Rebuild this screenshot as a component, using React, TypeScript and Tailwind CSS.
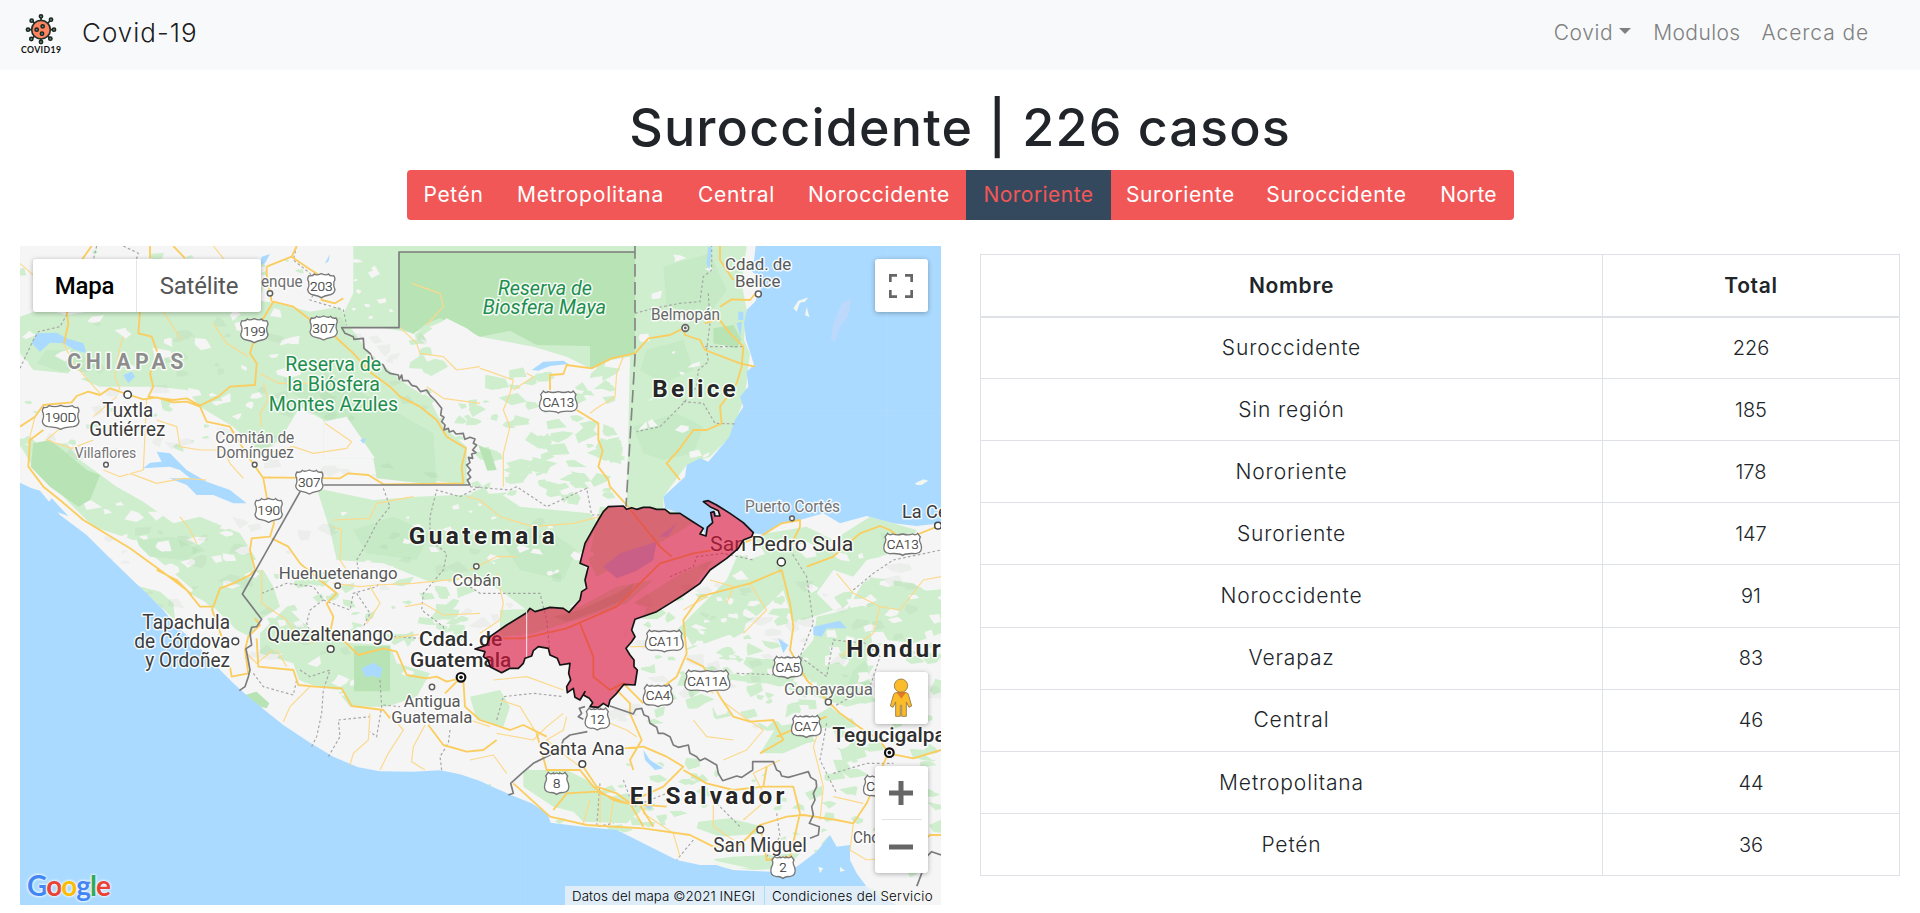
import type { ReactNode } from 'react';

/* ---------- map geometry ---------- */

const PACIFIC =
  'M60,728 95,745 120,752 180,825 260,885 330,955 410,1032 440,1060 490,1110 530,1160 560,1185 600,1225 640,1270 700,1330 745,1370 800,1415 850,1455 930,1508 1000,1550 1075,1582 1140,1594 1240,1595 1320,1591 1380,1603 1440,1623 1480,1642 1540,1668 1595,1690 1642,1720 1652,1748 1730,1758 1850,1770 1900,1795 1970,1830 2030,1860 2100,1875 2150,1875 2200,1890 2310,1895 2390,1880 2450,1835 2490,1785 2510,1820 2550,1815 2550,1860 2570,1900 2600,1940 2640,1970 2690,1995 60,1995Z';
const CARIBBEAN =
  'M2267,18 2262,60 2245,85 2275,110 2282,150 2265,185 2240,210 2232,250 2238,300 2250,335 2262,375 2240,395 2245,440 2220,470 2230,500 2205,540 2188,590 2155,630 2125,665 2100,655 2060,675 2055,710 1990,770 1995,805 2040,820 2110,865 2115,885 2135,850 2150,820 2115,785 2190,820 2260,880 2295,885 2340,850 2400,840 2470,820 2520,850 2600,828 2680,850 2750,858 2823,850 2823,18Z';
const REGION =
  'M415,800 460,798 470,808 485,803 500,808 520,802 540,802 560,808 585,808 600,820 630,820 665,843 700,865 690,882 708,888 712,862 728,848 722,818 732,815 735,828 750,828 745,812 720,800 700,785 715,782 740,795 780,820 820,848 850,878 845,890 820,900 805,925 770,955 720,990 690,1030 640,1065 600,1090 560,1115 495,1138 485,1170 495,1190 485,1205 468,1225 480,1245 492,1260 492,1280 502,1290 495,1335 462,1333 440,1360 420,1380 415,1400 400,1390 385,1402 360,1400 368,1388 358,1375 340,1365 345,1355 330,1380 315,1372 310,1345 292,1358 290,1340 302,1320 296,1300 300,1270 270,1275 262,1255 240,1245 235,1225 205,1220 190,1232 185,1248 165,1255 160,1270 145,1285 120,1285 95,1298 60,1280 55,1260 40,1250 45,1235 15,1227 50,1215 60,1190 110,1155 170,1118 180,1105 195,1115 240,1102 280,1105 297,1117 312,1100 330,1080 335,1055 350,1045 345,1020 355,980 330,970 345,910 385,840 400,815Z';

const GREENS = [
  'M60,230 130,205 200,225 420,190 560,215 700,170 830,190 930,215 1020,200 1050,260 1100,330 1200,420 1290,480 1330,560 1400,620 1400,735 1130,700 1120,655 970,655 970,540 900,500 840,600 780,640 700,560 600,500 560,450 470,440 300,440 200,400 100,390 60,340Z',
  'M1060,18H2240L2225,130 2240,210 2232,300 2250,340 2235,470 2190,590 2130,650 2060,675 1990,770 1990,810 1880,800 1890,350 1830,360 1770,385 1700,350 1600,320 1440,290 1340,240 1240,280 1130,260 1010,262 1060,160Z',
  'M60,615 200,610 240,660 350,740 430,785 520,850 600,830 720,880 770,960 730,1050 660,1070 640,1110 580,1050 500,980 400,900 280,860 190,770 110,700Z',
  'M950,745 1120,780 1250,770 1500,760 1560,800 1770,820 1795,850 1740,960 1765,1000 1740,1080 1700,1105 1580,1110 1500,1050 1400,1000 1300,1030 1150,970 1010,960 990,870Z',
  'M415,1038 480,1055 520,1090 525,1140Z',
  'M1800,800 2040,815 2080,850 1960,920 1790,1010 1765,960Z M1500,1110 1740,1100 1850,1040 1960,1020 1880,1090 1760,1130 1600,1180 1500,1190Z M1900,1090 2060,990 2140,960 2080,1040 1980,1110Z',
  'M780,1180 860,1100 900,1140 970,1200 1060,1210 1170,1215 1190,1270 1290,1300 1250,1370 1160,1400 1050,1400 1010,1350 900,1330 880,1270 780,1240Z',
  'M640,990 790,990 820,1040 840,1100 780,1140 750,1190 710,1170 640,1100 570,1060Z',
  'M2220,930 2300,880 2420,860 2500,900 2610,830 2750,870 2730,930 2600,960 2560,1010 2500,990 2450,1060 2500,1110 2380,1150 2350,1050 2280,1120 2200,1180 2060,1230 2030,1170 2180,1020Z',
  'M2450,1130 2540,1110 2600,1010 2740,1030 2823,1080 2823,1180 2740,1210 2660,1200 2600,1250 2620,1380 2540,1400 2450,1370 2300,1330 2200,1330 2240,1250 2380,1270 2440,1200Z',
  'M2330,1460 2430,1440 2490,1400 2570,1460 2600,1550 2530,1570 2510,1490 2420,1510 2350,1540 2280,1540Z',
  'M1570,1590 1700,1590 1760,1620 1830,1670 1880,1660 1920,1710 1880,1750 1750,1745 1720,1715 1660,1700 1570,1640Z',
  'M2095,1745 2190,1735 2290,1760 2290,1780 2160,1790 2090,1765Z M2140,1858 2200,1850 2400,1840 2360,1885 2260,1890 2180,1880Z',
  'M1410,1370 1500,1350 1530,1400 1510,1460 1430,1440Z',
  'M2490,1940 2550,1925 2660,1960 2600,1994 2540,1994Z',
];
const DEEP = [
  'M1198,36H1905V340L1830,360 1770,385V318L1610,315 1530,272 1440,290 1400,270 1320,235 1280,250 1240,282 1198,262Z',
  'M100,610 150,600 200,640 260,690 300,705 270,780 235,800 150,740 92,680Z',
  'M1062,1218H1170V1354H1062Z',
  'M2140,265 2200,255 2225,300 2210,325 2140,310Z',
  'M1435,615 1470,630 1490,690 1462,692Z',
  'M735,1365 770,1355 808,1390 800,1405 760,1395Z',
  'M1660,1130 1740,1110 1850,1060 1900,1030 1890,1070 1800,1110 1700,1145Z',
];
const MID = [
  'M860,440 1000,410 1160,500 1300,580 1310,735 1130,715 1120,655 1060,560 960,530Z',
  'M140,330 220,330 300,380 180,395 110,370Z',
  'M1990,80 2130,40 2180,150 2130,220 2000,200Z',
  'M1940,330 2050,300 2080,390 1990,430 1920,390Z',
  'M1900,560 2030,520 2110,560 2080,640 1990,660 1930,640Z',
  'M400,900 520,890 600,930 560,960 450,950Z',
  'M1060,870 1180,830 1290,880 1250,960 1100,940Z',
  'M1500,900 1660,880 1730,930 1690,1020 1560,990Z',
  'M2640,880 2700,880 2720,920 2660,930Z',
  'M2560,1290 2600,1260 2610,1350 2530,1370Z',
];
const LAKES = [
  'M95,310 110,280 170,278 200,295 250,310 260,340 225,330 190,310 150,308 120,335Z',
  'M470,635 510,640 560,690 620,725 690,750 740,790 700,790 640,765 590,765 560,735 508,715 570,715 540,690 510,680 430,685 450,668 485,665Z',
  'M370,405 395,395 405,410 385,430Z M785,50 810,42 795,70 780,75Z M990,42 985,65 975,70Z M1080,600 1097,594 1092,612Z',
  'M130,808 155,775 205,828 170,815Z',
  'M1085,1285 1120,1268 1148,1285 1140,1315 1118,1308 1095,1310Z',
  'M1595,390 1630,365 1690,362 1705,372 1650,378 1615,392Z',
  'M2125,20 2135,20 2128,90 2120,70Z M2215,215H2230V240H2215Z M2210,250 2225,245 2222,290Z',
  'M2440,1160 2520,1142 2540,1165 2480,1165 2465,1190 2440,1185Z M2335,1195 2365,1215 2350,1240Z',
  'M1930,1530 1950,1560 1990,1585 1965,1590 1935,1560Z M1930,1700 1965,1690 1950,1708Z',
  'M1810,980 1860,940 1970,905 1960,960 1910,992 1850,1015Z M1975,890 2030,850 2005,890Z',
];
const ISLANDS = [
  'M2380,205 2395,182 2425,172 2415,185 2400,188 2390,215Z M2420,200 2428,232 2415,225Z M2745,730 2770,718 2785,722 2765,735 2750,735Z',
  'M2455,1880 2470,1885 2460,1900Z M2520,1880 2535,1892 2520,1895Z M2090,1855 2160,1865 2250,1885 2180,1885Z',
];

const MAIN_ROADS = [
  'M60,560 105,530 130,495 215,487 230,468 265,455 300,465 330,445 380,462 430,478 470,472 520,487 560,485 600,500 620,545 690,560 720,610 745,650 790,715 800,770 822,850 810,890 755,895 750,930 765,990 750,1005 700,1030 660,1045 640,1100 600,1100 560,1050 480,990 390,925 250,840 180,780 130,740 85,680 90,600 130,570',
  'M420,215 415,280 455,290 475,345 450,400 460,440 445,470 520,480 560,475 600,497 655,470 690,440 765,435 770,370 750,340 765,290 790,235 820,185 880,200 925,235 1000,285 1060,340 1115,400 1170,440 1200,470 1260,500 1310,540 1340,590 1398,625 1385,680 1390,730 1150,733 1105,705 1045,700 1020,715 790,712',
  'M800,80 875,50 925,85 965,110 965,180 1005,190 1030,175 M890,18 875,50 M800,80 800,105 815,185 M450,18 450,55 M520,18 555,55 M275,18 245,60',
  'M200,215 205,250 192,310 M470,990 530,1020 575,1065',
  'M635,1105 665,1190 M765,1135 780,1155 745,1190 735,1230 745,1300 695,1310 690,1280 M770,1195 775,1280 880,1290 895,1335 945,1340 1025,1345 1055,1398 1150,1410 1170,1435',
  'M815,895 865,920 900,970 960,1020 1010,1060 980,1090 1000,1130 990,1180 1040,1210 1075,1245 1150,1225 1190,1235 1220,1305 1280,1315 1310,1310 1340,1325 1380,1315 1335,1360 M1390,1320 1395,1400 1440,1440 1530,1470 1570,1455 1640,1490 M1285,1455 1330,1515 1400,1535 1450,1530 1490,1500',
  'M1905,340 1835,355 1775,385 1700,375 1690,402 1650,405V450 M1730,510 1795,550 1795,600 1808,632 1795,680 1825,720 1830,740 1880,795 1940,870 1980,920 2015,950 M1905,340 1945,295 2010,285 2050,265 2055,285 2100,300 2115,330 2220,370 2265,380 M2115,250 2155,235 2190,280 2230,320 2225,380 2210,430 2160,500 2165,550 2120,570 2080,570 2040,625 2000,670 2040,720 M2265,162 2250,180 2195,178 2160,200 M2160,18V60L2200,120',
  'M1470,1195 1570,1195 1700,1165 1850,1100 1980,970 2080,940 2200,920 2280,890 2345,850 2400,840 2400,860 2370,920 M1740,1150 1780,1250 1780,1310 1830,1350 1870,1330 1930,1390 M1840,1340 1890,1390 1890,1420 1925,1500 1890,1560 1900,1590',
  'M2420,980 2500,950 2580,880 2640,858 2670,870 2710,900 2823,855 M2345,990 2370,1090 2380,1160 2370,1230 2420,1320 2480,1380 2520,1420 2590,1470 2640,1500 2665,1540 2740,1555 2823,1530 M2345,990 2250,1030 2100,1070 2050,1140 2060,1240 2030,1310 1990,1340 1940,1370',
  'M2060,1255 2110,1280 2160,1370 2200,1430 2250,1445 2320,1440 2350,1500 2280,1540 M2480,1430 2400,1460 2330,1490',
  'M1610,1480 1640,1590 1740,1590 1780,1640 1840,1680 1880,1690 1990,1640 2050,1580 2000,1550 1930,1520 1870,1525 M1540,1630 1650,1730 1760,1755 1930,1765 2070,1785 2140,1820 2220,1815 2280,1755 2360,1730 2410,1725 2510,1740 2560,1750 2600,1690 2660,1550 M1660,1710 1700,1660 1790,1655 1880,1690 2000,1700',
  'M2050,1590 2120,1630 2200,1650 2290,1640 2380,1640 2400,1720 2370,1850 2300,1860 2280,1755 M2300,1580 2290,1640 M1750,1580 1790,1640 1850,1660 1890,1690 1930,1760 M1910,1680 1960,1760 M2690,1870 2790,1785 2823,1785',
];
const MINOR_ROADS = [
  'M640,18 690,80 M60,70 105,110 M180,130 205,215 M490,215 545,300 M190,310 220,370 300,460 M370,290 360,320 345,410 360,450 M640,250 680,310 745,350 M780,400 835,430 930,430 M790,430 805,480 780,520 785,560',
  'M105,530 85,610 M180,565 140,600 215,625 280,600 M350,470 280,530 M440,475 430,690 360,710 310,690 M470,540 530,560 540,620 600,630 670,630 690,670 730,715 M390,700 470,730 550,715 620,720 M800,640 880,620 940,640 1040,625 1055,605 975,550',
  'M1235,130 1320,160 1330,200 1280,255 M1200,262 1250,310 1260,340 1330,350 1370,390 1440,380 M1280,440 1330,475 1440,490 M1440,385 1470,395 1540,420 1530,460 1510,510 1530,560 1510,640 1510,740 M1540,450 1600,410 1580,400 M1870,350 1850,400 1845,470 1790,505 1770,520',
  'M1000,840 1110,835 1130,790 1240,770 M1000,860 1025,870 1020,960 1040,990 M540,830 570,870 590,910 M1400,770 1440,780 1500,830 1600,860 1720,850 1800,830 M1410,990 1490,950 1550,950',
  'M785,990 785,1090 860,1140 880,1170 940,1210 M1000,1030 1080,1040 1130,1035 1240,1030 1440,1010 M1060,1200 1110,1200 M1100,1150 1140,1090 1110,1040 M1215,1100 1270,1090 1330,1125 1440,1120 M1180,1195 1210,1190 1280,1180',
  'M740,1240 770,1270 820,1230 M830,1230 860,1280 M930,1340 870,1400 850,1445 M1110,1420 1105,1500 1060,1540 1050,1575 M1170,1425 1210,1470 1165,1540 1140,1590 M1275,1455 1240,1520 1235,1565 1275,1590',
  'M1480,1320 1580,1310 1690,1350 M1490,1480 1600,1500 1640,1460 1690,1420 M1410,1560 1480,1545 1520,1600 M1700,1430 1690,1470 1640,1500 1700,1550 1740,1580 M1830,1450 1880,1470 1910,1490 M1800,1660 1800,1750 M1840,1680 1830,1750 M1770,1680 1750,1750',
  'M2510,1000 2560,1060 2640,1100 2620,1180 2560,1220 2520,1250 M2640,1100 2700,1110 2770,1020 2823,1010 M2060,1310 2110,1330 2140,1360 M2170,1385 2230,1430 2290,1470 2240,1530 2170,1560 M2460,1460 2440,1520 2470,1640 2460,1740 M2500,1670 2590,1690 M2560,1750 2550,1830 2600,1860 2690,1850',
  'M1890,1220 1960,1220 2010,1230 M2050,1110 2120,1070 M1960,1650 1930,1720 2020,1780 2040,1850 M2140,1690 2140,1760 2200,1800 M2340,1560 2260,1600 2300,1680 2230,1740',
  'M1490,1000 1510,1090 1500,1140 1440,1180 M2130,1020 2200,1040 2180,1090 M2250,1030 2300,1110 2230,1180 M1500,1380 1560,1400 1610,1480 M1410,1440 1470,1460 M1640,1590 1680,1650 M2200,1500 2120,1490 2080,1440',
];
const DOTTED = [
  'M60,385 100,300 115,275 180,260 205,215 M290,18 280,60 M370,18 415,40 405,70 M890,18 880,60 930,100 950,150 930,180 1030,210 1040,255',
  'M1905,220 1960,205 2040,190 2100,185 2110,110 2135,90 2135,18 M2125,160 2130,250 2120,330 2125,365 2095,390 2090,440 2050,490 1980,560 1910,575 M2115,320H2235 M2050,485 2110,490 2145,550 2210,552 M1410,740 1530,750 1550,740 1640,800 1760,745 1775,825 1800,825',
  'M1150,745 1170,800 1130,850 1100,910 1070,960 1075,990 M1440,740 1380,770 1310,750 1290,830 1290,900 1340,940 1330,990 1270,1060 1265,1110 1330,1160 1340,1220',
  'M785,1060 860,1030 940,1040 970,1080 930,1110 920,1150 940,1200 M970,1080 1050,1110 1060,1060 1130,1040 1160,990 M1070,1060 1110,1120 1090,1160 M1180,1190 1260,1195 M900,1290 930,1310 990,1290 970,1350 965,1420 950,1490 935,1520 M1140,1320 1145,1400 1130,1490 1110,1475 M985,1550 1020,1490 1015,1440 1110,1430 M760,1300 790,1340 880,1365 890,1320',
  'M1150,1395 1200,1400 M1350,1470 1345,1510 1320,1550 1325,1590 M1410,1040 1440,1060 1620,1060 1640,1140 1650,1240 M1490,1440 1510,1370 1600,1360 1690,1370',
  'M2010,1010 2080,980 2090,950 2170,940 2260,960 M2370,930 2420,1010 2440,1150 2400,1250 2480,1310 2500,1200 2600,1210 2640,1250 2610,1340 2500,1400 M2560,1050 2620,1000 2680,960 2823,930 M2210,1300 2350,1305',
  'M1800,1630 1790,1760 1840,1750 M1870,1620 1900,1700 2000,1660 M2080,1800 2030,1860 M2150,1690 2220,1760 M2480,1450 2460,1560 2510,1660 M2500,1600 2600,1570 2680,1570 M2330,1720 2340,1790 2300,1850',
];
const BORDERS = [
  'M1905,36H1197V263H1025L1035,280 1060,290 1062,298 1090,295 1092,325 1110,340 1118,358 1130,365 1150,375 1158,392 1170,400 1195,405 1198,418 1205,405 1208,422 1225,422 1235,436 1250,440 1262,455 1280,450 1290,466 1305,480 1325,505 1322,525 1332,532 1325,545 1335,555 1332,570 1345,565 1348,576 1360,572 1368,582 1390,580 1392,590 1395,598 1410,592 1425,597 1420,610 1430,615 1418,630 1428,638 1415,642 1418,655 1405,652 1410,668 1400,675 1412,690 1403,700 1412,712 1402,720 1410,735H970',
  'M902,752 727,1062 785,1138 770,1160 755,1162 750,1180 755,1215 738,1226 750,1290 745,1310 735,1340 718,1352',
  'M1762,1475 1710,1485 1690,1500 1680,1530 1600,1570 1565,1600 1532,1630 1540,1660 1525,1665 M1755,1400 1738,1405 1745,1420 1735,1430 1750,1438',
  'M1830,1398 1900,1422 1907,1408 1925,1405 1932,1425 1945,1430 1950,1450 1970,1462 1975,1480 1990,1480 2010,1490 2020,1515 2035,1522 2065,1515 2070,1540 2090,1550 2100,1562 2115,1555 2150,1575 2155,1600 2168,1622 2210,1608 2225,1612 2258,1590 2258,1565 2320,1565 2330,1590 2340,1595 2345,1608 2365,1612 2390,1605 2425,1595 2432,1612 2448,1622 2450,1640 2440,1660 2445,1680 2435,1700 2440,1725 2428,1750 2458,1760 2455,1785 2430,1795',
  'M2823,1845 2795,1835 2760,1870 2765,1900 2750,1940',
];

/* Deterministic scatter of small angular land-cover patches. */
const patches = (seed: number, count: number, box: [number, number, number, number], size: number) => {
  let s = seed;
  const rnd = () => {
    s = (s * 16807) % 2147483647;
    return s / 2147483647;
  };
  let d = '';
  for (let i = 0; i < count; i++) {
    const cx = box[0] + rnd() * box[2];
    const cy = box[1] + rnd() * box[3];
    const n = 4 + Math.floor(rnd() * 3);
    const r = size * (0.4 + rnd());
    for (let k = 0; k < n; k++) {
      const a = (k / n) * Math.PI * 2 + rnd() * 0.9;
      const q = r * (0.35 + rnd() * 0.75);
      d += `${k ? 'L' : 'M'}${(cx + Math.cos(a) * q * 1.25).toFixed(0)},${(cy + Math.sin(a) * q * 0.75).toFixed(0)}`;
    }
    d += 'Z';
  }
  return d;
};
const PALE = [
  patches(11, 40, [80, 220, 800, 330], 24),
  patches(29, 10, [1060, 60, 120, 180], 14),
  patches(41, 18, [1930, 40, 250, 640], 17),
  patches(53, 38, [60, 740, 720, 320], 24),
  patches(67, 30, [960, 760, 800, 240], 16),
  patches(79, 34, [700, 1130, 680, 260], 20),
  patches(83, 100, [2050, 900, 770, 650], 28),
].join('');
const SCATTER = [
  patches(101, 90, [1420, 370, 440, 410], 30),
  patches(113, 16, [60, 450, 700, 180], 18),
  patches(127, 46, [820, 1000, 600, 200], 26),
  patches(131, 90, [1940, 1060, 880, 400], 32),
  patches(149, 50, [1420, 1560, 1000, 240], 20),
  patches(151, 44, [2450, 1420, 370, 480], 30),
  patches(163, 18, [60, 30, 900, 150], 20),
  patches(167, 26, [1230, 250, 200, 380], 26),
].join('');
const SHADE = [
  patches(211, 60, [150, 220, 1150, 500], 26),
  patches(223, 60, [300, 830, 1400, 420], 28),
  patches(227, 60, [1800, 980, 1000, 480], 28),
].join('');

/* ---------- map symbols ---------- */

type LabelProps = { x: number; y: number; w: number; s?: number; c?: string; weight?: number; italic?: boolean; gap?: boolean; children: string };
function Label({ x, y, w, s = 58, c = '#3c3c3c', weight = 400, italic, gap, children }: LabelProps) {
  return (
    <text
      x={x} y={y} textLength={w} lengthAdjust={gap ? 'spacing' : 'spacingAndGlyphs'} fontSize={s} fontWeight={weight}
      fontStyle={italic ? 'italic' : 'normal'} fill={c} stroke="#fff" strokeOpacity=".85" strokeWidth="9" strokeLinejoin="round" paintOrder="stroke"
    >
      {children}
    </text>
  );
}

function Town({ x, y, r = 8, c = '#5f5f5f' }: { x: number; y: number; r?: number; c?: string }) {
  return <circle cx={x} cy={y} r={r} fill="#fff" stroke={c} strokeWidth="4.5" />;
}

function Capital({ x, y, r = 13, c = '#111' }: { x: number; y: number; r?: number; c?: string }) {
  return (
    <g fill="none" stroke={c}>
      <circle cx={x} cy={y} r={r} fill="#fff" strokeWidth={r * 0.5} />
      <circle cx={x} cy={y} r={r * 0.42} fill={c} stroke="none" />
    </g>
  );
}

function MxShield({ x, y, w = 82, children }: { x: number; y: number; w?: number; children: string }) {
  const h = w / 2;
  return (
    <g transform={`translate(${x} ${y})`}>
      <path
        d={`M${-h + 4},-30 Q${-h + 14},-27 ${-h + 20},-35 Q-16,-29 0,-36 Q16,-29 ${h - 20},-35 Q${h - 14},-27 ${h - 4},-30 Q${h + 3},-20 ${h - 3},-12 Q${h - 6},0 ${h},12 Q${h - 2},26 ${h - 18},28 Q10,30 0,36 Q-10,30 ${-h + 18},28 Q${-h + 2},26 ${-h},12 Q${-h + 6},0 ${-h + 3},-12 Q${-h - 3},-20 ${-h + 4},-30Z`}
        fill="#fff" stroke="#777" strokeWidth="4"
      />
      <text y="15" textAnchor="middle" fontSize="41" fill="#3c3c3c" stroke="#3c3c3c" strokeWidth=".6">{children}</text>
    </g>
  );
}

function CaShield({ x, y, w = 114, children }: { x: number; y: number; w?: number; children: string }) {
  const h = w / 2;
  return (
    <g transform={`translate(${x} ${y})`}>
      <path
        d={`M${-h + 12},-33 Q${-h + 18},-25 ${-h + 27},-31 Q${-h * 0.3},-26 0,-31 Q${h * 0.3},-26 ${h - 27},-31 Q${h - 18},-25 ${h - 12},-33 L${h - 4},-22 Q${h - 10},-14 ${h - 2},0 Q${h + 5},25 ${h - 18},28 Q10,26 0,33 Q-10,26 ${-h + 18},28 Q${-h - 5},25 ${-h + 2},0 Q${-h + 10},-14 ${-h + 4},-22Z`}
        fill="#fff" stroke="#777" strokeWidth="4"
      />
      <text y="14" textAnchor="middle" fontSize="40" fill="#3c3c3c" stroke="#3c3c3c" strokeWidth=".6">{children}</text>
    </g>
  );
}

function MapCanvas() {
  return (
    <svg className="block size-full font-['Roboto',sans-serif]" viewBox="60 18 2763 1977" preserveAspectRatio="none">
      <rect x="60" y="18" width="2763" height="1977" fill="#f5f5f5" />
      <path d={SCATTER} fill="#ceeecd" />
      <path d={GREENS.join('')} fill="#ceeecd" />
      <path d={MID.join('')} fill="#c5eac5" />
      <path d={PALE} fill="#f5f5f5" />
      <path d={SHADE} fill="#4f7f4f" opacity=".05" />
      <path d={DEEP.join('')} fill="#b7e3b5" />
      <path d="M1270,285 1340,235 1400,265 1440,295 1540,330 1640,350 1580,380 1480,400 1400,370 1300,340Z M970,545 1040,530 1125,655 970,655Z" fill="#f5f5f5" />
      <path d={PACIFIC + CARIBBEAN + LAKES.join('')} fill="#aadaff" />
      <path d={ISLANDS.join('')} fill="#f1f6ee" />
      <path d="M2500,250 2525,190 2555,175 2545,230 2520,260 2505,305 2492,300Z" fill="#bcd8fb" />
      <path d={DOTTED.join('')} fill="none" stroke="#a6a6a6" strokeWidth="3.5" strokeDasharray="8 7" />
      <path d={MINOR_ROADS.join('')} fill="none" stroke="#fcd98b" strokeWidth="3.5" strokeLinejoin="round" />
      <path d={MAIN_ROADS.join('')} fill="none" stroke="#fbcd5e" strokeWidth="5.5" strokeLinejoin="round" />
      <path d={BORDERS.join('')} fill="none" stroke="#7c7c7c" strokeWidth="5" strokeLinejoin="round" />
      <path d="M1905,18V350L1878,800" fill="none" stroke="#858585" strokeWidth="5" strokeDasharray="38 16" />
      <path d="M2663,18V830M2230,511H2823M1577,1770V1995" stroke="#b4dcfd" strokeWidth="2" />

      <Label x={783} y={142} w={125} s={48} c="#6f6f6f">enque</Label>
      <Town x={810} y={160} />
      <Label x={202} y={387} w={348} s={64} c="#8d8d8d" weight={700} gap>CHIAPAS</Label>
      <Town x={383} y={464} r={11} c="#444" />
      <Label x={307} y={531} w={153}>Tuxtla</Label>
      <Label x={268} y={588} w={228}>Gutiérrez</Label>
      <Label x={224} y={655} w={185} s={46} c="#757575">Villaflores</Label>
      <Town x={318} y={674} r={7} />
      <Label x={646} y={608} w={237} s={49} c="#686868">Comitán de</Label>
      <Label x={649} y={655} w={233} s={49} c="#686868">Domínguez</Label>
      <Town x={764} y={674} r={7} />
      <Label x={856} y={393} w={287} c="#1e8e4e">Reserva de</Label>
      <Label x={862} y={453} w={278} c="#1e8e4e">la Biósfera</Label>
      <Label x={806} y={512} w={388} c="#1e8e4e">Montes Azules</Label>
      <Label x={1494} y={164} w={282} c="#1e8e4e" italic>Reserva de</Label>
      <Label x={1448} y={223} w={370} c="#1e8e4e" italic>Biosfera Maya</Label>
      <Label x={2175} y={89} w={199} s={51} c="#585858">Cdad. de</Label>
      <Label x={2205} y={140} w={136} s={51} c="#585858">Belice</Label>
      <Town x={2275} y={162} r={9} />
      <Label x={1953} y={240} w={207} s={48} c="#686868">Belmopán</Label>
      <Capital x={2056} y={264} r={10} c="#666" />
      <Label x={1957} y={471} w={250} s={73} c="#262626" weight={700} gap>Belice</Label>
      <Label x={1226} y={911} w={438} s={73} c="#262626" weight={700} gap>Guatemala</Label>
      <Town x={1429} y={979} />
      <Label x={1357} y={1038} w={146} s={51} c="#585858">Cobán</Label>
      <Label x={836} y={1016} w={357} s={51} c="#585858">Huehuetenango</Label>
      <Town x={1013} y={1037} />
      <Label x={427} y={1166} w={263}>Tapachula</Label>
      <Label x={403} y={1224} w={288}>de Córdova</Label>
      <Town x={706} y={1204} r={10} c="#444" />
      <Label x={436} y={1281} w={254}>y Ordoñez</Label>
      <Label x={801} y={1203} w={380}>Quezaltenango</Label>
      <Town x={992} y={1227} r={10} c="#444" />
      <Label x={1257} y={1217} w={250} s={60} c="#303030" weight={500}>Cdad. de</Label>
      <Label x={1230} y={1280} w={304} s={60} c="#303030" weight={500}>Guatemala</Label>
      <Capital x={1383} y={1312} />
      <Town x={1296} y={1341} />
      <Label x={1211} y={1400} w={171} s={51} c="#585858">Antigua</Label>
      <Label x={1174} y={1450} w={243} s={51} c="#585858">Guatemala</Label>
      <Label x={2130} y={934} w={430} s={61} c="#333">San Pedro Sula</Label>
      <Town x={2344} y={966} r={12} c="#333" />
      <Label x={2235} y={817} w={285} s={49} c="#757575">Puerto Cortés</Label>
      <Town x={2376} y={835} r={7} />
      <Label x={2706} y={833} w={210} s={57}>La Ceiba</Label>
      <Town x={2814} y={857} r={10} c="#444" />
      <Label x={2539} y={1251} w={375} s={73} c="#262626" weight={700} gap>Honduras</Label>
      <Label x={2352} y={1364} w={267} s={50} c="#686868">Comayagua</Label>
      <Town x={2485} y={1386} r={9} />
      <Label x={2497} y={1505} w={340} s={60} c="#303030" weight={500}>Tegucigalpa</Label>
      <Capital x={2668} y={1538} />
      <Label x={1616} y={1546} w={258} s={57}>Santa Ana</Label>
      <Town x={1747} y={1572} r={10} c="#444" />
      <Label x={1889} y={1692} w={464} s={73} c="#262626" weight={700} gap>El Salvador</Label>
      <Label x={2140} y={1835} w={281}>San Miguel</Label>
      <Town x={2281} y={1769} r={10} c="#444" />
      <Label x={2559} y={1808} w={205} s={51} c="#585858">Choluteca</Label>

      <MxShield x={964} y={137}>203</MxShield>
      <MxShield x={763} y={272}>199</MxShield>
      <MxShield x={971} y={264}>307</MxShield>
      <MxShield x={182} y={532} w={110}>190D</MxShield>
      <MxShield x={928} y={726}>307</MxShield>
      <MxShield x={806} y={811}>190</MxShield>
      <CaShield x={1675} y={486}>CA13</CaShield>
      <CaShield x={2708} y={913}>CA13</CaShield>
      <CaShield x={1993} y={1203}>CA11</CaShield>
      <CaShield x={2122} y={1323} w={136}>CA11A</CaShield>
      <CaShield x={1974} y={1367} w={90}>CA4</CaShield>
      <CaShield x={2363} y={1282} w={90}>CA5</CaShield>
      <CaShield x={2419} y={1459} w={90}>CA7</CaShield>
      <CaShield x={2635} y={1639} w={90}>CA1</CaShield>
      <CaShield x={1792} y={1437} w={74}>12</CaShield>
      <CaShield x={1670} y={1630} w={74}>8</CaShield>
      <CaShield x={2349} y={1882} w={74}>2</CaShield>

      <g transform="translate(1410 0)">
        <path d={REGION} fill="#dc143c" fillOpacity=".62" stroke="#141414" strokeWidth="5" strokeLinejoin="round" />
        <path d="M170,1112V1250" stroke="#f8efef" strokeWidth="3" />
      </g>
    </svg>
  );
}

/* ---------- icons ---------- */

function CovidLogo() {
  return (
    <svg className="h-[50px] w-[50px]" viewBox="0 0 150 150">
      <g stroke="#23302b" strokeWidth="5">
        <path d="M75,65V28M75,65V98M75,65H35M75,65H115M75,65 48,38M75,65 103,38M75,65 48,92M75,65 103,92" />
        <circle cx="75" cy="65" r="28" fill="#ff8460" />
      </g>
      <g fill="#5a9170" stroke="#1c2522" strokeWidth="4.5">
        <circle cx="75" cy="25" r="5" /><circle cx="75" cy="102" r="5" />
        <circle cx="36" cy="65" r="5" /><circle cx="114" cy="65" r="5" />
        <circle cx="47" cy="38" r="5" /><circle cx="105" cy="35" r="5" />
        <circle cx="46" cy="93" r="5" /><circle cx="103" cy="92" r="5" />
        <circle cx="80" cy="55" r="5" /><circle cx="62" cy="65" r="5" /><circle cx="78" cy="77" r="5" />
      </g>
      <text x="15" y="134" textLength="120" fontSize="26" fontWeight="700" fill="#111" className="font-['Lato',sans-serif]">COVID19</text>
    </svg>
  );
}

function Pegman() {
  return (
    <svg className="mr-[2px] h-[40px] w-[24px]" viewBox="0 0 72 120" fill="#fbbc2c" stroke="#8d7440" strokeWidth="2.5" strokeLinejoin="round">
      <path d="M20,44H52Q57,44 59,52L68,84 60,88 52,72V115H38V82H34V115H20V72L12,88 4,84 13,52Q15,44 20,44Z" />
      <path d="M22,42H52L37,62Z" fill="#e0792b" stroke="none" />
      <circle cx="36" cy="23" r="20" />
    </svg>
  );
}

/* ---------- page ---------- */

const REGIONS = [
  { name: 'Petén', cls: 'w-[93px] rounded-l tracking-[0.6px]' },
  { name: 'Metropolitana', cls: 'w-[181px] tracking-[0.8px]' },
  { name: 'Central', cls: 'w-[111px] tracking-[0.8px]' },
  { name: 'Noroccidente', cls: 'w-[174px] tracking-[0.65px]' },
  { name: 'Nororiente', cls: 'w-[145px] tracking-[0.45px]', active: true },
  { name: 'Suroriente', cls: 'w-[139px] tracking-[0.6px]' },
  { name: 'Suroccidente', cls: 'w-[173px] tracking-[0.75px]' },
  { name: 'Norte', cls: 'w-[91px] rounded-r tracking-[0.2px]' },
];

const ROWS: [string, number][] = [
  ['Suroccidente', 226], ['Sin región', 185], ['Nororiente', 178], ['Suroriente', 147], ['Noroccidente', 91],
  ['Verapaz', 83], ['Central', 46], ['Metropolitana', 44], ['Petén', 36],
];

const GOOGLE = [
  ['G', 'text-[#4285f4]'], ['o', 'text-[#ea4335]'], ['o', 'text-[#fbbc05]'],
  ['g', 'text-[#4285f4]'], ['l', 'text-[#34a853]'], ['e', 'text-[#ea4335]'],
];

function Cell({ head, children }: { head?: boolean; children: ReactNode }) {
  return head ? (
    <th className="h-[62px] border border-b-2 border-[#dee2e6] p-0 text-center font-semibold tracking-[0.7px]">{children}</th>
  ) : (
    <td className="h-[62px] border border-[#dee2e6] p-0 text-center tracking-[0.85px]">{children}</td>
  );
}

export default function App() {
  return (
    <div className="h-[913px] overflow-hidden bg-white font-['Inter',sans-serif] text-[21px] font-light text-[#212529]">
      <header className="flex h-[70px] items-center bg-[#f8f9fa] pr-[51px] pb-1 pl-4">
        <CovidLogo />
        <span className="ml-4 text-[26px] leading-none tracking-[1px] text-black/90">Covid-19</span>
        <nav className="ml-auto flex items-center text-[#808080]">
          <span className="mr-[22px] flex items-center gap-[6px]">
            <span className="tracking-[0.6px]">Covid</span>
            <span className="-mt-1 border-x-[6px] border-t-[6px] border-x-transparent border-t-[#808080]" />
          </span>
          <span className="mr-[21px] tracking-[0.4px]">Modulos</span>
          <span className="tracking-[0.9px]">Acerca de</span>
        </nav>
      </header>

      <h1 className="mt-[28px] pb-[5px] text-center text-[52px] leading-[60px] font-medium tracking-[1.15px]">
        Suroccidente | 226 casos
      </h1>

      <div className="mt-[7px] flex justify-center">
        {REGIONS.map((r) => (
          <button
            key={r.name}
            className={`h-[50px] pl-px font-normal ${r.cls} ${r.active ? 'bg-[#34495e] text-[#f25757]' : 'bg-[#f25757] text-white'}`}
          >
            {r.name}
          </button>
        ))}
      </div>

      <main className="mt-[26px] flex gap-[39px] pl-5">
        <section className="relative h-[659px] w-[921px] overflow-hidden">
          <MapCanvas />

          <div className="absolute top-[13px] left-[13px] flex h-[53px] rounded-[3px] bg-white pt-px font-['Roboto',sans-serif] text-[24px] shadow-[0_1px_5px_rgba(0,0,0,0.3)]">
            <div className="flex w-[104px] items-center justify-center border-r border-[#e6e6e6] font-medium tracking-[-0.2px] text-black">Mapa</div>
            <div className="flex w-[124px] items-center justify-center font-normal tracking-[-0.2px] text-[#565656]">Satélite</div>
          </div>

          <div className="absolute top-[13px] right-[13px] flex h-[53px] w-[53px] items-center justify-center rounded-[3px] bg-white shadow-[0_1px_5px_rgba(0,0,0,0.3)]">
            <svg className="mr-px size-6" viewBox="0 0 18 18" fill="#666">
              <path d="M0,0V6H2V2H6V0ZM16,0H12V2H16V6H18V0ZM16,16H12V18H18V12H16ZM2,12H0V18H6V16H2Z" />
            </svg>
          </div>

          <div className="absolute top-[426px] right-[13px] flex h-[52px] w-[53px] items-center justify-center rounded-[3px] bg-white shadow-[0_1px_5px_rgba(0,0,0,0.3)]">
            <Pegman />
          </div>

          <div className="absolute top-[520px] right-[13px] flex h-[107px] w-[53px] flex-col items-center rounded-[3px] bg-white shadow-[0_1px_5px_rgba(0,0,0,0.3)]">
            <div className="flex h-[53px] items-center pr-px">
              <svg className="size-6" viewBox="0 0 24 24"><path d="M0,12H24M12,0V24" stroke="#666" strokeWidth="5" /></svg>
            </div>
            <div className="h-px w-10 bg-[#e2e2e2]" />
            <div className="flex h-[53px] items-center pr-px">
              <svg className="size-6" viewBox="0 0 24 24"><path d="M0,12H24" stroke="#666" strokeWidth="5" /></svg>
            </div>
          </div>

          <div className="absolute bottom-px left-[7px] font-['Lato',sans-serif] text-[28px] leading-[38px] font-bold tracking-[-1px] [text-shadow:0_0_3px_#fff,0_0_3px_#fff]">
            {GOOGLE.map(([ch, cls], i) => (
              <span key={i} className={cls}>{ch}</span>
            ))}
          </div>

          <div className="absolute right-0 bottom-0 flex h-[19px] gap-px text-[13.3px] leading-[20px] whitespace-nowrap text-black">
            <span className="w-[199px] bg-[#f5f5f5]/70 pl-[7px] tracking-[0.1px]">Datos del mapa ©2021 INEGI</span>
            <span className="w-[176px] bg-[#f5f5f5]/70 pl-[7px] tracking-[0.3px]">Condiciones del Servicio</span>
          </div>
        </section>

        <table className="mt-2 h-[622px] w-[919px] table-fixed border-collapse self-start">
          <colgroup>
            <col className="w-[622px]" />
            <col className="w-[297px]" />
          </colgroup>
          <thead>
            <tr>
              <Cell head>Nombre</Cell>
              <Cell head>Total</Cell>
            </tr>
          </thead>
          <tbody>
            {ROWS.map(([name, total]) => (
              <tr key={name}>
                <Cell>{name}</Cell>
                <Cell><span className="text-xl tracking-normal">{total}</span></Cell>
              </tr>
            ))}
          </tbody>
        </table>
      </main>
    </div>
  );
}
